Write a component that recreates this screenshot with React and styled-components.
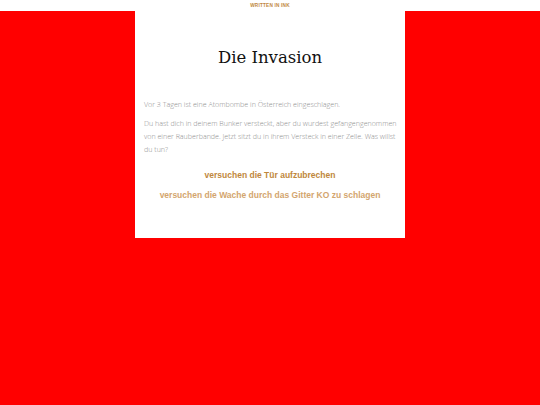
import React from 'react'
import styled, {createGlobalStyle} from 'styled-components'

const Global = createGlobalStyle`
  html, body {
    margin: 0;
    padding: 0;
    background: #ff0000;
  }
  body {
    font-family: "Open Sans", "DejaVu Sans", sans-serif;
  }
`

const Header = styled.div`
  height: 11px;
  background: #fff;
  display: flex;
  align-items: center;
  justify-content: center;
`

const HeaderTitle = styled.span`
  font-family: "Liberation Sans", Arial, sans-serif;
  font-size: 4.7px;
  font-weight: bold;
  letter-spacing: 0.2px;
  color: #c0873c;
`

const Outer = styled.div`
  display: flex;
  justify-content: center;
`

const Container = styled.div`
  width: 270px;
  height: 227px;
  background: #fff;
  box-sizing: border-box;
  padding: 37px 9px 0 9px;
`

const Title = styled.h1`
  margin: 0 0 31px 0;
  text-align: center;
  font-family: "DejaVu Serif", "Liberation Serif", serif;
  font-weight: normal;
  font-size: 16.5px;
  color: #111;
`

const Story = styled.div`
  margin-right: -6px;
`

const Para = styled.p`
  margin: 0 0 6px 0;
  font-size: 7.1px;
  font-weight: 300;
  line-height: 13px;
  color: #8e8e8e;
`

const Choices = styled.div`
  margin-top: 13px;
  display: flex;
  flex-direction: column;
  align-items: center;
  gap: 7px;
`

const Choice = styled.a`
  font-family: "Liberation Sans", Arial, sans-serif;
  font-weight: bold;
  font-size: 8.5px;
  line-height: 13px;
  color: ${p => (p.$faded ? '#d3a56e' : '#c0873c')};
  text-decoration: none;
  cursor: pointer;
`

export default function App() {
  return (
    <>
      <Global />
      <Header>
        <HeaderTitle>WRITTEN IN INK</HeaderTitle>
      </Header>
      <Outer>
        <Container>
          <Title>Die Invasion</Title>
          <Story>
            <Para>Vor 3 Tagen ist eine Atombombe in Österreich eingeschlagen.</Para>
            <Para>
              Du hast dich in deinem Bunker versteckt, aber du wurdest gefangengenommen von einer
              Rauberbande. Jetzt sitzt du in ihrem Versteck in einer Zelle. Was willst du tun?
            </Para>
          </Story>
          <Choices>
            <Choice>versuchen die Tür aufzubrechen</Choice>
            <Choice $faded>versuchen die Wache durch das Gitter KO zu schlagen</Choice>
          </Choices>
        </Container>
      </Outer>
    </>
  )
}
